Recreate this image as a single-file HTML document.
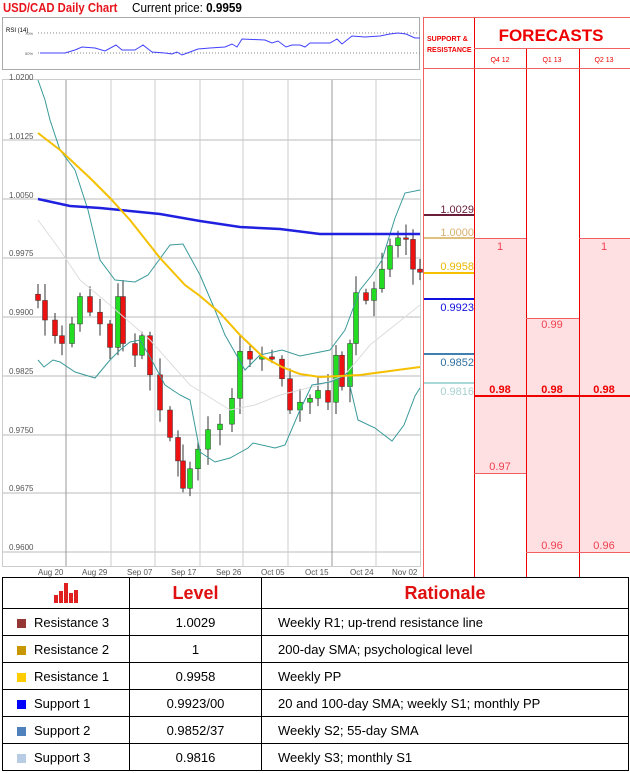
<!DOCTYPE html>
<html><head><meta charset="utf-8"><style>
body{margin:0;width:630px;height:773px;background:#fff;overflow:hidden;font-family:"Liberation Sans",sans-serif;position:relative}
.t{position:absolute;white-space:nowrap}
table{position:absolute;left:2px;top:577px;border-collapse:collapse;font-size:13px}
td{border:1px solid #000;height:26px;padding:0}
.sq{display:inline-block;width:9px;height:9px;margin:0 8px 0 14px;vertical-align:-1px}
</style></head><body>
<div class="t" style="left:3px;top:0;font-size:13px;color:#e8141c;font-weight:bold;transform:scaleX(0.87);transform-origin:0 0">USD/CAD Daily Chart</div>
<div class="t" style="left:132px;top:0;font-size:13px;color:#000;transform:scaleX(0.9);transform-origin:0 0">Current price: <b>0.9959</b></div>
<svg width="630" height="577" style="position:absolute;left:0;top:0" id="s">
<rect x="2.5" y="17.5" width="417" height="52" fill="#fff" stroke="#aaa"/>
<text x="6" y="32" font-size="6" font-family="Liberation Sans">RSI (14)</text>
<line x1="38" y1="33" x2="420" y2="33" stroke="#888" stroke-dasharray="1,2"/>
<line x1="38" y1="53" x2="420" y2="53" stroke="#888" stroke-dasharray="1,2"/>
<text x="25" y="35" font-size="4" fill="#555">70%</text><text x="25" y="55" font-size="4" fill="#555">50%</text>
<polyline fill="none" stroke="#4040ff" stroke-width="1" points="40,53 65,53 75,50 82,47 95,48 105,51 116,45 122,50 135,50 143,45 152,52 165,53 172,54 177,52 182,55 190,52 198,49 210,48 225,47 232,44 237,47 242,39 265,40 272,43 278,41 286,47 292,45 300,45 305,47 310,43 330,43 337,39 342,44 352,36 365,37 380,36 390,34 398,33 406,34 415,38 420,38"/>
<rect x="2.5" y="79.5" width="418" height="487" fill="#fff" stroke="#ccc"/>
<g id="grid" stroke="#bbb" stroke-width="1"></g>
<g id="c"></g>
<polyline fill="none" stroke="#ddd" stroke-width="1" points="38,220 60,250 80,280 110,305 150,340 190,385 230,410 255,405 280,395 320,385 345,375 370,345 395,325 420,305"/>
<polyline fill="none" stroke="#3a9a9a" stroke-width="1" points="38,80 45,100 50,120 60,150 75,170 88,210 100,260 115,280 135,282 148,275 170,245 183,244 200,275 215,310 225,335 245,370 260,355 282,350 300,356 330,350 345,330 360,290 372,275 382,260 395,218 405,193 420,190"/>
<polyline fill="none" stroke="#3a9a9a" stroke-width="1" points="38,360 44,367 53,360 60,362 75,372 95,378 110,360 120,350 130,342 140,340 150,357 165,385 180,395 190,400 200,452 215,462 230,458 248,448 253,443 275,448 285,445 300,410 312,385 330,382 342,377 347,373 358,420 375,428 392,441 404,425 415,396 420,388"/>
<polyline fill="none" stroke="#2020e0" stroke-width="2.5" points="38,199 70,206 100,208 130,211 160,214 200,221 240,227 280,229 320,234 360,234 420,234"/>
<polyline fill="none" stroke="#f5c000" stroke-width="2" points="38,133 60,150 90,178 110,198 130,220 160,258 185,285 200,296 220,313 240,335 262,356 282,367 300,374 320,377 340,376 360,375 390,371 420,367"/>
<g font-size="8" fill="#555" font-family="Liberation Sans">
<text x="9" y="80">1.0200</text><text x="9" y="139">1.0125</text><text x="9" y="198">1.0050</text><text x="9" y="256">0.9975</text><text x="9" y="315">0.9900</text><text x="9" y="374">0.9825</text><text x="9" y="433">0.9750</text><text x="9" y="491">0.9675</text><text x="9" y="550">0.9600</text>
<text x="38" y="575">Aug 20</text><text x="82" y="575">Aug 29</text><text x="127" y="575">Sep 07</text><text x="171" y="575">Sep 17</text><text x="216" y="575">Sep 26</text><text x="261" y="575">Oct 05</text><text x="305" y="575">Oct 15</text><text x="350" y="575">Oct 24</text><text x="392" y="575">Nov 02</text>
</g>
<rect x="474" y="238" width="52" height="235" fill="#ffe0e2"/>
<rect x="526" y="318" width="53" height="234" fill="#ffe0e2"/>
<rect x="579" y="238" width="51" height="314" fill="#ffe0e2"/>
<g stroke="#f06060" stroke-width="1">
<line x1="423.5" y1="17" x2="423.5" y2="577"/><line x1="474.5" y1="17" x2="474.5" y2="577" stroke="#e00"/>
<line x1="526.5" y1="48" x2="526.5" y2="577" stroke="#e00"/><line x1="579.5" y1="48" x2="579.5" y2="577" stroke="#e00"/>
<line x1="423" y1="17.5" x2="630" y2="17.5"/><line x1="474" y1="48.5" x2="630" y2="48.5"/><line x1="423" y1="68.5" x2="630" y2="68.5"/>
<line x1="474" y1="238.5" x2="526" y2="238.5"/><line x1="579" y1="238.5" x2="630" y2="238.5"/>
<line x1="526" y1="318.5" x2="579" y2="318.5"/><line x1="474" y1="473.5" x2="526" y2="473.5"/>
<line x1="526" y1="552.5" x2="630" y2="552.5"/>
</g>
<line x1="474" y1="396" x2="630" y2="396" stroke="#e00" stroke-width="2"/>
<text x="427" y="41" font-size="7" fill="#e00" font-weight="bold">SUPPORT &amp;</text>
<text x="427" y="52" font-size="7" fill="#e00" font-weight="bold">RESISTANCE</text>
<text x="551" y="41" font-size="17" fill="#e00" font-weight="bold" text-anchor="middle">FORECASTS</text>
<g font-size="7" fill="#e00" text-anchor="middle"><text x="500" y="62">Q4 12</text><text x="552" y="62">Q1 13</text><text x="604" y="62">Q2 13</text></g>
<g font-size="11" fill="#f04050" text-anchor="middle"><text x="500" y="250">1</text><text x="604" y="250">1</text><text x="552" y="328">0.99</text><text x="500" y="470">0.97</text><text x="552" y="549">0.96</text><text x="604" y="549">0.96</text></g>
<g font-size="11" fill="#e00" font-weight="bold" text-anchor="middle"><text x="500" y="393">0.98</text><text x="552" y="393">0.98</text><text x="604" y="393">0.98</text></g>
<line x1="424" y1="215" x2="474" y2="215" stroke="#6b1e3a" stroke-width="2"/>
<line x1="424" y1="238" x2="474" y2="238" stroke="#e0c080" stroke-width="2"/>
<line x1="424" y1="273" x2="474" y2="273" stroke="#f5c000" stroke-width="2"/>
<line x1="424" y1="299" x2="474" y2="299" stroke="#1010e0" stroke-width="2"/>
<line x1="424" y1="354" x2="474" y2="354" stroke="#4080b0" stroke-width="2"/>
<line x1="424" y1="383" x2="474" y2="383" stroke="#a8d8d8" stroke-width="2"/>
<g font-size="11" text-anchor="end">
<text x="474" y="213" fill="#6b1e3a">1.0029</text><text x="474" y="236" fill="#d8b070">1.0000</text><text x="474" y="270" fill="#e8b800">0.9958</text>
<text x="474" y="311" fill="#1010e0">0.9923</text><text x="474" y="366" fill="#3070a0">0.9852</text><text x="474" y="395" fill="#a8d0d0">0.9816</text></g>
</svg>
<script>
var g=document.getElementById('grid'),h='';
[140,199,258,317,376,435,493,552].forEach(function(y){h+='<line x1="3" x2="420" y1="'+y+'" y2="'+y+'"/>'});
[66,111,155,200,243,288,332,376].forEach(function(x,i){h+='<line y1="80" y2="566" x1="'+x+'" x2="'+x+'" stroke="'+(i==0||i==6?'#999':'#ccc')+'"/>'});
g.innerHTML=h;
function Y(p){return 140+(1.0125-p)*7827}
var pts=[[38,0.992],[45,0.9895],[55,0.9875],[62,0.9865],[72,0.989],[80,0.9925],[90,0.9905],[100,0.989],[110,0.986],[118,0.9925],[123,0.9865],[135,0.985],[142,0.9875],[150,0.9825],[160,0.978],[170,0.9745],[178,0.9715],[183,0.968],[190,0.9705],[198,0.973],[208,0.9755],[220,0.9762],[232,0.9795],[240,0.9855],[250,0.9845],[262,0.9848],[272,0.9845],[282,0.982],[290,0.978],[300,0.979],[310,0.9795],[318,0.9805],[328,0.979],[336,0.985],[342,0.981],[350,0.9865],[356,0.993],[366,0.992],[374,0.9935],[382,0.996],[390,0.999],[398,1.000],[406,0.9998],[413,0.996],[420,0.9956]];
var c='',prev=pts[0][1]+0.0008,s=7;
pts.forEach(function(p,i){var o=prev,cl=p[1];s=(s*37+11)%23;var hi=Math.max(o,cl)+0.0005+(s%5)*0.0004,lo=Math.min(o,cl)-0.0005-(s%4)*0.0005;
var x=p[0],up=cl>=o,col=up?'#22dd22':'#ee1111';
c+='<line x1="'+x+'" x2="'+x+'" y1="'+Y(hi)+'" y2="'+Y(lo)+'" stroke="#333"/>';
var t=Y(Math.max(o,cl)),b=Y(Math.min(o,cl));if(b-t<1.5)b=t+1.5;
c+='<rect x="'+(x-2.5)+'" y="'+t+'" width="5" height="'+(b-t)+'" fill="'+col+'" stroke="#333" stroke-width="0.5"/>';prev=cl});
document.getElementById('c').innerHTML=c;
</script>
<table>
<tr style="height:31px"><td style="width:126px;text-align:center"><svg width="26" height="22" viewBox="0 0 26 22"><g fill="#e02020"><rect x="1" y="14" width="4" height="8"/><rect x="6" y="10" width="4" height="12"/><rect x="11" y="2" width="4" height="20"/><rect x="16" y="12" width="4" height="10"/><rect x="21" y="9" width="4" height="13"/></g></svg></td>
<td style="width:131px;text-align:center;color:#e01010;font-weight:bold;font-size:18px">Level</td>
<td style="width:366px;text-align:center;color:#e01010;font-weight:bold;font-size:18px">Rationale</td></tr>
<tr><td><span class="sq" style="background:#943634"></span>Resistance 3</td><td style="text-align:center">1.0029</td><td style="padding-left:16px">Weekly R1; up-trend resistance line</td></tr>
<tr><td><span class="sq" style="background:#c89600"></span>Resistance 2</td><td style="text-align:center">1</td><td style="padding-left:16px">200-day SMA; psychological level</td></tr>
<tr><td><span class="sq" style="background:#ffcc00"></span>Resistance 1</td><td style="text-align:center">0.9958</td><td style="padding-left:16px">Weekly PP</td></tr>
<tr><td><span class="sq" style="background:#0000ff"></span>Support 1</td><td style="text-align:center">0.9923/00</td><td style="padding-left:16px">20 and 100-day SMA; weekly S1; monthly PP</td></tr>
<tr><td><span class="sq" style="background:#4f81bd"></span>Support 2</td><td style="text-align:center">0.9852/37</td><td style="padding-left:16px">Weekly S2; 55-day SMA</td></tr>
<tr><td><span class="sq" style="background:#b8cce4"></span>Support 3</td><td style="text-align:center">0.9816</td><td style="padding-left:16px">Weekly S3; monthly S1</td></tr>
</table>
</body></html>
